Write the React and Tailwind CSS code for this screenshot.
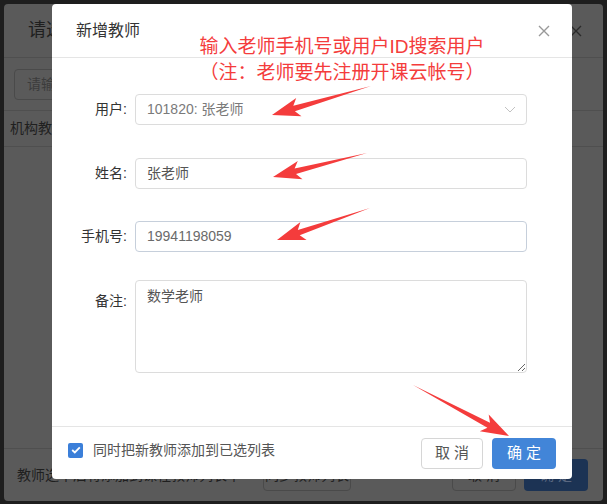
import React from "react";

const arrowPoints = (x1, y1, x2, y2) => {
  const dx = x2 - x1;
  const dy = y2 - y1;
  const len = Math.hypot(dx, dy);
  const ux = dx / len;
  const uy = dy / len;
  const nx = -uy;
  const ny = ux;
  const hl = 23;
  const hw = 9.5;
  const sw = 2.8;
  const back = 5;
  const bx = x2 - ux * hl;
  const by = y2 - uy * hl;
  const pts = [
    [x1, y1],
    [bx + nx * sw, by + ny * sw],
    [bx - ux * back + nx * hw, by - uy * back + ny * hw],
    [x2, y2],
    [bx - ux * back - nx * hw, by - uy * back - ny * hw],
    [bx - nx * sw, by - ny * sw],
  ];
  return pts.map((p) => p.map((v) => v.toFixed(1)).join(",")).join(" ");
};

const arrows = [
  [371, 86, 272, 115],
  [367, 153, 273, 177],
  [370, 208, 277, 240],
  [413, 385, 509, 436],
];

const CloseIcon = ({ color }) => (
  <svg width="12" height="12" viewBox="0 0 12 12">
    <path d="M1 1 L11 11 M11 1 L1 11" stroke={color} strokeWidth="1.4" fill="none" />
  </svg>
);

const FormRow = ({ label, children, labelClass = "items-center" }) => (
  <div className="flex">
    <div className={`w-[75px] flex justify-end text-[14px] text-[#333] ${labelClass}`}>{label}</div>
    <div className="ml-[8px] w-[392px]">{children}</div>
  </div>
);

export default function App() {
  return (
    <div className="relative w-[607px] h-[504px] overflow-hidden bg-[#1e1e1e] pt-[4px] pl-[4px] font-['Liberation_Sans','Noto_Sans_CJK_SC',sans-serif]">
      {/* dimmed dialog behind */}
      <div className="w-[599px] h-[497px] rounded-[4px] bg-[#5a5a5a] flex flex-col">
        <div className="h-[54px] flex items-center justify-between pl-[24px] pr-[21px] border-b border-[#4f4f4f]">
          <span className="text-[18px] text-[#1f1f1f]">请选择</span>
          <CloseIcon color="#2a2a2a" />
        </div>
        <div className="h-[53px] px-[10px] flex items-center border-b border-[#4f4f4f]">
          <div className="w-[320px] h-[31px] rounded-[4px] border border-[#4a4a4a] px-[12px] flex items-center text-[14px] text-[#3c3c3c]">
            请输入教师姓名或手机号
          </div>
        </div>
        <div className="h-[36px] px-[6px] flex items-center border-b border-[#4f4f4f] text-[14px] text-[#1f1f1f]">
          机构教师列表
        </div>
        <div className="flex-1" />
        <div className="h-[53px] border-t border-[#4f4f4f] flex items-center pl-[13px] pr-[15px]">
          <span className="text-[14px] text-[#1f1f1f]">教师选中后将添加到课程教师列表中</span>
          <div className="ml-[22px] w-[88px] h-[32px] rounded-[4px] border border-[#4a4a4a] flex items-center justify-center text-[14px] text-[#222]">
            同步教师列表
          </div>
          <div className="flex-1" />
          <div className="w-[64px] h-[32px] rounded-[4px] border border-[#4a4a4a] flex items-center justify-center text-[14px] text-[#222]">
            取 消
          </div>
          <div className="ml-[8px] w-[64px] h-[32px] rounded-[4px] bg-[#1c3354] flex items-center justify-center text-[14px] text-[#5a6780]">
            确 定
          </div>
        </div>
      </div>

      {/* front dialog */}
      <div className="absolute left-[52px] top-[4px] w-[520px] h-[475px] rounded-[4px] bg-white flex flex-col">
        <div className="h-[54px] flex items-center justify-between pl-[24px] pr-[22px] border-b border-[#e5e5e5]">
          <span className="text-[16px] text-[#333]">新增教师</span>
          <CloseIcon color="#999" />
        </div>

        <div className="flex-1 pt-[36px]">
          <FormRow label="用户:">
            <div className="h-[31px] rounded-[4px] border border-[#dcdcdc] pl-[11px] pr-[10px] flex items-center justify-between text-[14px] text-[#7a7a7a]">
              <span>101820: 张老师</span>
              <svg width="12" height="7" viewBox="0 0 12 7">
                <path d="M1 1 L6 6 L11 1" stroke="#c2c2c2" strokeWidth="1" fill="none" />
              </svg>
            </div>
          </FormRow>
          <div className="mt-[33px]">
            <FormRow label="姓名:">
              <div className="h-[31px] rounded-[4px] border border-[#dcdcdc] px-[11px] flex items-center text-[14px] text-[#555]">
                张老师
              </div>
            </FormRow>
          </div>
          <div className="mt-[32px]">
            <FormRow label="手机号:">
              <div className="h-[31px] rounded-[4px] border border-[#c6cfdb] px-[11px] flex items-center text-[14px] text-[#6a6a6a]">
                19941198059
              </div>
            </FormRow>
          </div>
          <div className="mt-[28px]">
            <FormRow label="备注:" labelClass="items-start pt-[11px]">
              <textarea
                readOnly
                defaultValue="数学老师"
                className="block w-[392px] h-[93px] rounded-[4px] border border-[#dcdcdc] px-[11px] pt-[5px] text-[14px] text-[#555] outline-none"
              />
            </FormRow>
          </div>
        </div>

        <div className="h-[53px] border-t border-[#e5e5e5] flex items-center pl-[16px] pr-[16px]">
          <div className="flex items-center mb-[6px]">
            <div className="w-[15px] h-[15px] rounded-[2px] bg-[#3b7fd9] flex items-center justify-center">
              <svg width="10" height="8" viewBox="0 0 10 8">
                <path d="M1.2 4 L3.8 6.4 L8.8 1.3" stroke="white" strokeWidth="1.8" fill="none" />
              </svg>
            </div>
            <span className="ml-[10px] text-[14px] text-[#555]">同时把新教师添加到已选列表</span>
          </div>
          <div className="flex-1" />
          <button className="w-[62px] h-[31px] rounded-[4px] border border-[#d6d6d6] bg-white text-[15px] text-[#555]">
            取 消
          </button>
          <button className="ml-[9px] w-[64px] h-[31px] rounded-[4px] bg-[#4285d8] text-[15px] text-white">
            确 定
          </button>
        </div>
      </div>

      {/* red annotation */}
      <div className="absolute left-[190px] top-[34px] w-[304px] text-center text-[19px] leading-[26px] text-[#f43c3c] whitespace-nowrap">
        <div>输入老师手机号或用户ID搜索用户</div>
        <div>（注：老师要先注册开课云帐号）</div>
      </div>
      <svg className="absolute left-0 top-0" width="607" height="504" viewBox="0 0 607 504">
        {arrows.map((a, i) => (
          <polygon key={i} points={arrowPoints(...a)} fill="#f43c3c" />
        ))}
      </svg>
    </div>
  );
}
